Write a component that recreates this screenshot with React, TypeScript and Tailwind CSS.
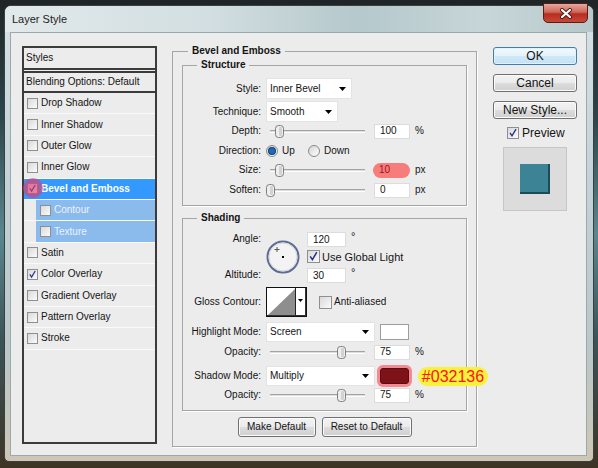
import type { ReactNode } from "react";
import clsx from "clsx";

const LAYERS = [
	{ id: "drop", label: "Drop Shadow" },
	{ id: "inner-shadow", label: "Inner Shadow" },
	{ id: "outer-glow", label: "Outer Glow" },
	{ id: "inner-glow", label: "Inner Glow" },
	{ id: "bevel", label: "Bevel and Emboss", checked: true, selected: true },
	{ id: "contour", label: "Contour", sub: true },
	{ id: "texture", label: "Texture", sub: true },
	{ id: "satin", label: "Satin" },
	{ id: "color", label: "Color Overlay", checked: true },
	{ id: "gradient", label: "Gradient Overlay" },
	{ id: "pattern", label: "Pattern Overlay" },
	{ id: "stroke", label: "Stroke" },
];

function Check({ checked = false, className }: { checked?: boolean; className?: string }) {
	return (
		<span
			className={clsx(
				"relative inline-block h-[11px] w-[11px] shrink-0 border border-[#8e8f8f] bg-gradient-to-br from-[#d9d9d9] to-[#fbfbfb]",
				className
			)}
		>
			{checked && (
				<svg viewBox="0 0 11 11" className="absolute inset-0 h-full w-full">
					<path d="M2.2 5.4 L4.4 8.6 L8.8 1.2" fill="none" stroke="#22308c" strokeWidth="1.5" />
				</svg>
			)}
		</span>
	);
}

function Radio({ on = false }: { on?: boolean }) {
	return (
		<span className="flex h-[12px] w-[12px] shrink-0 items-center justify-center rounded-full border border-[#8a8a8a] bg-gradient-to-br from-[#d4d4d4] to-white">
			{on && <span className="h-[6px] w-[6px] rounded-full bg-[#1e6bb5] shadow-[0_0_0_1px_#0f3f74]" />}
		</span>
	);
}

function Label({ children }: { children: ReactNode }) {
	return <span className="w-[78px] shrink-0 text-right">{children}</span>;
}

function Arrow() {
	return (
		<svg width="7" height="4" viewBox="0 0 7 4">
			<polygon points="0,0 7,0 3.5,4" fill="#000" />
		</svg>
	);
}

function Select({ text, className }: { text: string; className?: string }) {
	return (
		<div
			className={clsx(
				"ml-[5px] flex shrink-0 items-center justify-between border border-[#e3e3e3] bg-white pl-[3px] pr-[5px]",
				className
			)}
		>
			<span>{text}</span>
			<Arrow />
		</div>
	);
}

function Field({ value, className }: { value: string; className?: string }) {
	return (
		<div
			className={clsx(
				"flex h-[15px] w-[36px] shrink-0 items-center border border-[#dcdcdc] bg-white pl-[5px]",
				className
			)}
		>
			{value}
		</div>
	);
}

function Slider({ pos }: { pos: number }) {
	return (
		<div className="relative ml-[9px] h-[14px] w-[95px] shrink-0">
			<div className="absolute left-0 right-0 top-[6px] h-[3px] border-t border-b border-t-[#a3a3a3] border-b-white bg-[#dedede]" />
			<svg
				className="absolute top-[1px]"
				style={{ left: pos - 4.5 }}
				width="9"
				height="13"
				viewBox="0 0 9 13"
			>
				<rect x="0.5" y="0.5" width="8" height="12" rx="3" fill="#eeeeee" stroke="#7d7d7d" />
				<rect x="4" y="2" width="3" height="9" rx="1" fill="#d2d2d2" />
			</svg>
		</div>
	);
}

function Button({ children, className }: { children: ReactNode; className?: string }) {
	return (
		<div
			className={clsx(
				"flex items-center justify-center rounded-[3px] border border-[#707070] bg-[linear-gradient(180deg,#f3f3f3_0%,#ebebeb_50%,#dddddd_51%,#cfcfcf_100%)] shadow-[inset_0_0_0_1px_#fbfbfb]",
				className
			)}
		>
			{children}
		</div>
	);
}

function StyleList() {
	return (
		<div className="mt-[1px] flex h-[398px] w-[135px] shrink-0 flex-col border-2 border-[#3b3b3b] bg-[#ececec]">
			<div className="flex h-[22px] shrink-0 items-center border-b-2 border-[#3b3b3b] pl-[2px]">Styles</div>
			<div className="h-px shrink-0" />
			<div className="flex h-[22px] shrink-0 items-center border-y-2 border-[#3b3b3b] pl-[2px]">
				Blending Options: Default
			</div>
			{LAYERS.map((item) =>
				item.sub ? (
					<div key={item.id} className="flex h-[21.4px] shrink-0 border-b border-[#fafafa] pl-[12px]">
						<div className="flex flex-1 items-center bg-[#8bbaed] pl-[4px] text-[#eaf2fd]">
							<Check />
							<span className="ml-[3px]">{item.label}</span>
						</div>
					</div>
				) : (
					<div
						key={item.id}
						className={clsx(
							"relative flex h-[21.4px] shrink-0 items-center border-b border-[#fafafa] pl-[3px]",
							item.selected && "bg-[#3399ff] font-bold text-white"
						)}
					>
						<Check checked={item.checked} />
						{item.selected && (
							<span className="absolute left-[-1px] top-[-1px] h-[20px] w-[20px] rounded-full bg-[rgba(222,58,110,0.62)]" />
						)}
						<span className="ml-[3px]">{item.label}</span>
					</div>
				)
			)}
		</div>
	);
}

function AngleDial() {
	return (
		<svg className="ml-[5px] mt-[8px] shrink-0" width="34" height="34" viewBox="0 0 34 34">
			<circle cx="17" cy="17" r="15.5" fill="#f3f3f3" stroke="#5d6c96" strokeWidth="2" />
			<circle cx="17" cy="17" r="14" fill="none" stroke="#d6d6d6" />
			<path d="M8.5 9.5h5M11 7v5" stroke="#555" strokeWidth="1" />
			<rect x="16" y="16" width="2" height="2" fill="#000" />
		</svg>
	);
}

function GlossContour() {
	return (
		<svg className="ml-[5px] shrink-0" width="41" height="30" viewBox="0 0 41 30">
			<rect x="0.5" y="0.5" width="40" height="29" fill="#fff" stroke="#111" />
			<polygon points="1.5,28.5 29.5,1.5 29.5,28.5" fill="#8e8e8e" />
			<line x1="29.5" y1="1" x2="29.5" y2="29" stroke="#222" />
			<line x1="1" y1="28.5" x2="40" y2="28.5" stroke="#333" />
			<line x1="39.5" y1="1" x2="39.5" y2="29" stroke="#333" />
			<polygon points="32,12 37,12 34.5,15" fill="#000" />
		</svg>
	);
}

export default function App() {
	return (
		<div className="h-[468px] w-[598px] overflow-hidden bg-[linear-gradient(180deg,#1f2426_0%,#2c454b_25%,#5a878f_50%,#3b5459_72%,#3d3425_100%)] pl-[4px] pt-[5px] font-['Liberation_Sans',Arial,sans-serif] text-[10px] leading-[12px] text-[#141414]">
			<div className="flex h-[457px] w-[590px] flex-col rounded-b-[5px] rounded-t-[7px] border border-[#3a3f42] bg-[linear-gradient(180deg,#d7e2e5_0%,#c2d2d6_40%,#b9c7c8_75%,#cfc6b4_100%)]">
				<div className="flex h-[26px] shrink-0 items-center rounded-t-[6px] bg-[linear-gradient(90deg,#e2e9eb_0%,#d2dee1_35%,#b5c8cb_60%,#c7d6d9_82%,#b7c8cb_100%)] pl-[7px] pr-[5px]">
					<span className="text-[11px] text-[#1e1e1e]">Layer Style</span>
					<div className="-mt-[3px] ml-auto flex h-[20px] w-[45px] items-center justify-center self-start rounded-b-[5px] border border-[#5b1c14] bg-[linear-gradient(180deg,#e6a89d_0%,#d0665a_45%,#b72d1f_55%,#c6493a_100%)]">
						<svg width="14" height="11" viewBox="0 0 14 11">
							<path d="M3 2 L11 9 M11 2 L3 9" stroke="#4a1a12" strokeWidth="4" strokeLinecap="round" />
							<path d="M3 2 L11 9 M11 2 L3 9" stroke="#fff" strokeWidth="2.2" strokeLinecap="round" />
						</svg>
					</div>
				</div>

				<div className="ml-[5px] flex h-[424px] w-[577px] items-start border border-[#9aa9ad] bg-[#ececec] pl-[11px] pt-[12px]">
					<StyleList />

					<fieldset className="ml-[15px] w-[305px] min-w-0 shrink-0 border border-[#a5a5a5] pb-[9px] shadow-[1px_1px_0_#fff]">
						<legend className="ml-[15px] px-[4px] font-bold leading-[12px]">Bevel and Emboss</legend>

						<fieldset className="mx-[9px] mt-[2px] min-w-0 border border-[#a5a5a5] pb-[7px] pt-[7px] shadow-[1px_1px_0_#fff]">
							<legend className="ml-[14px] px-[4px] font-bold leading-[12px]">Structure</legend>
							<div className="flex h-[21px] items-center">
								<Label>Style:</Label>
								<Select text="Inner Bevel" className="h-[21px] w-[86px]" />
							</div>
							<div className="mt-[2px] flex h-[21px] items-center">
								<Label>Technique:</Label>
								<Select text="Smooth" className="h-[21px] w-[72px]" />
							</div>
							<div className="flex h-[18px] items-center">
								<Label>Depth:</Label>
								<Slider pos={9.5} />
								<Field value="100" className="ml-[9px]" />
								<span className="ml-[5px]">%</span>
							</div>
							<div className="flex h-[22px] items-center">
								<Label>Direction:</Label>
								<div className="ml-[5px] flex w-[42px] items-center">
									<Radio on />
									<span className="ml-[4px]">Up</span>
								</div>
								<Radio />
								<span className="ml-[4px]">Down</span>
							</div>
							<div className="flex h-[16px] items-center">
								<Label>Size:</Label>
								<Slider pos={9} />
								<div className="ml-[8px] flex h-[15px] w-[37px] items-center rounded-full bg-[#f77c7c] pl-[6px] text-[#9e1212]">
									10
								</div>
								<span className="ml-[5px]">px</span>
							</div>
							<div className="mt-[4px] flex h-[16px] items-center">
								<Label>Soften:</Label>
								<Slider pos={0} />
								<Field value="0" className="ml-[9px]" />
								<span className="ml-[5px]">px</span>
							</div>
						</fieldset>

						<fieldset className="mx-[9px] mt-[6px] min-w-0 border border-[#a5a5a5] pb-[8px] pt-[8px] shadow-[1px_1px_0_#fff]">
							<legend className="ml-[14px] px-[4px] font-bold leading-[12px]">Shading</legend>
							<div className="flex h-[50px]">
								<div className="flex w-[78px] shrink-0 flex-col justify-between pt-[1px] text-right">
									<span>Angle:</span>
									<span className="mb-[1px]">Altitude:</span>
								</div>
								<AngleDial />
								<div className="ml-[7px] flex flex-col">
									<div className="flex h-[14px] items-start">
										<Field value="120" className="h-[14px] w-[39px]" />
										<span className="-mt-[2px] ml-[5px] text-[11px]">°</span>
									</div>
									<div className="mt-[4px] flex h-[13px] items-center">
										<Check checked className="h-[13px] w-[13px]" />
										<span className="ml-[2px] text-[11px]">Use Global Light</span>
									</div>
									<div className="mt-[5px] flex h-[14px] items-start">
										<Field value="30" className="h-[14px] w-[39px]" />
										<span className="-mt-[2px] ml-[5px] text-[11px]">°</span>
									</div>
								</div>
							</div>
							<div className="mt-[5px] flex h-[30px] items-center">
								<Label>Gloss Contour:</Label>
								<GlossContour />
								<Check className="ml-[12px] h-[13px] w-[13px]" />
								<span className="ml-[2px]">Anti-aliased</span>
							</div>
							<div className="mt-[5px] flex h-[20px] items-center">
								<Label>Highlight Mode:</Label>
								<Select text="Screen" className="h-[20px] w-[109px]" />
								<span className="ml-[5px] h-[16px] w-[29px] shrink-0 border border-[#9d9d9d] bg-white" />
							</div>
							<div className="mt-[3px] flex h-[14px] items-center">
								<Label>Opacity:</Label>
								<Slider pos={71.5} />
								<Field value="75" className="ml-[9px]" />
								<span className="ml-[5px]">%</span>
							</div>
							<div className="mt-[7px] flex h-[20px] items-center">
								<Label>Shadow Mode:</Label>
								<Select text="Multiply" className="h-[20px] w-[109px]" />
								<span className="ml-[5px] h-[16px] w-[29px] shrink-0 rounded-[3px] border border-[#5a0c10] bg-[#7d1219] shadow-[0_0_0_3px_rgba(244,104,118,0.75)]" />
								<span className="ml-[9px] flex h-[19px] w-[70px] shrink-0 items-center justify-center rounded-full bg-[#f7f23c] text-[16px] leading-[19px] text-[#ff1212]">
									#032136
								</span>
							</div>
							<div className="mt-[2px] flex h-[14px] items-center">
								<Label>Opacity:</Label>
								<Slider pos={71.5} />
								<Field value="75" className="ml-[9px]" />
								<span className="ml-[5px]">%</span>
							</div>
						</fieldset>

						<div className="mt-[6px] flex justify-center gap-[6px]">
							<Button className="h-[20px] w-[78px]">Make Default</Button>
							<Button className="h-[20px] w-[90px]">Reset to Default</Button>
						</div>
					</fieldset>

					<div className="ml-[16px] flex w-[84px] shrink-0 flex-col text-[12px]">
						<div className="mt-[2px] flex h-[18px] items-center justify-center rounded-[3px] border border-[#3c7fb1] bg-[linear-gradient(180deg,#f2f9fd_0%,#e4f2fb_50%,#cfe8f8_51%,#c2e1f6_100%)] shadow-[inset_0_0_0_1px_#dff3fd]">
							OK
						</div>
						<Button className="mt-[9px] h-[18px]">Cancel</Button>
						<Button className="mt-[9px] h-[18px]">New Style...</Button>
						<div className="mt-[8px] flex h-[12px] items-center pl-[14px]">
							<Check checked className="h-[12px] w-[12px]" />
							<span className="ml-[3px]">Preview</span>
						</div>
						<div className="ml-[10px] mt-[8px] flex h-[64px] w-[64px] items-center justify-center border border-[#c6c6c6] bg-[#dcdcdc]">
							<div className="h-[30px] w-[30px] border-b-2 border-r-2 border-[#1f4b56] bg-[#3b8395]" />
						</div>
					</div>
				</div>
			</div>
		</div>
	);
}
